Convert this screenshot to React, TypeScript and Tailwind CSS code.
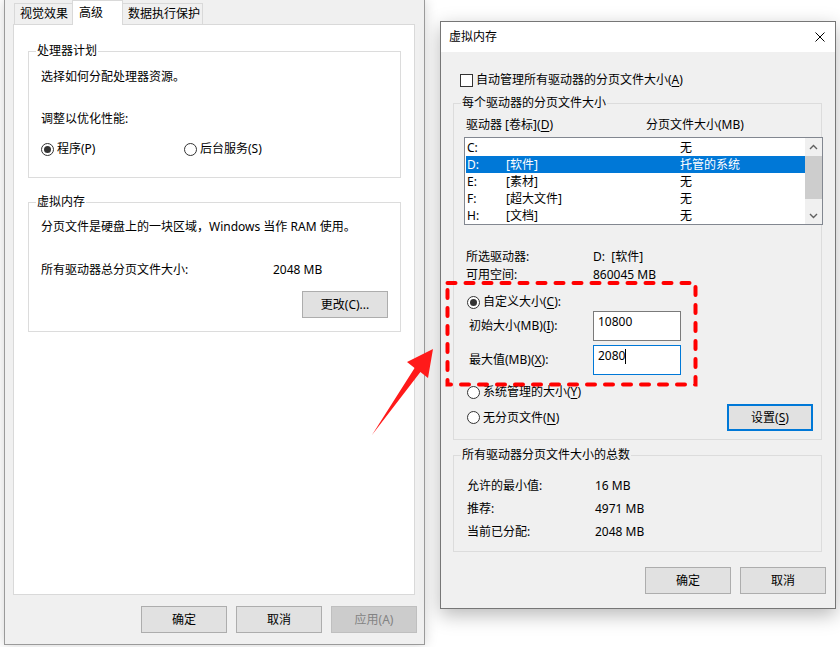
import type { ReactNode } from "react";

function GroupBox({
  title,
  labelBg,
  className,
  bodyClassName,
  children,
}: {
  title: string;
  labelBg: string;
  className: string;
  bodyClassName?: string;
  children: ReactNode;
}) {
  return (
    <div className={`border border-[#dcdcdc] ${className}`}>
      <div className="-mt-[9px] ml-[7px] flex">
        <span className={`px-[1px] leading-[16px] ${labelBg}`}>{title}</span>
      </div>
      <div className={bodyClassName}>{children}</div>
    </div>
  );
}

function Radio({ checked, children }: { checked?: boolean; children: ReactNode }) {
  return (
    <div className="flex h-[16px] items-center">
      <span className="flex h-[13px] w-[13px] items-center justify-center rounded-full border border-[#333] bg-white">
        {checked && <span className="h-[7px] w-[7px] rounded-full bg-[#333]" />}
      </span>
      <span className="ml-[3px] leading-[16px]">{children}</span>
    </div>
  );
}

function Button({
  children,
  focused,
  disabled,
}: {
  children: ReactNode;
  focused?: boolean;
  disabled?: boolean;
}) {
  if (disabled) {
    return (
      <div className="flex h-[27px] w-[86px] items-center justify-center border border-[#bfbfbf] bg-[#cccccc] text-[#838383]">
        {children}
      </div>
    );
  }
  return (
    <div
      className={
        focused
          ? "flex h-[27px] w-[86px] items-center justify-center border-2 border-[#0078d7] bg-[#e1e1e1]"
          : "flex h-[27px] w-[86px] items-center justify-center border border-[#adadad] bg-[#e1e1e1]"
      }
    >
      {children}
    </div>
  );
}

const U = ({ children }: { children: ReactNode }) => (
  <span className="underline underline-offset-[2px]">{children}</span>
);

const drives = [
  { letter: "C:", label: "", size: "无" },
  { letter: "D:", label: "[软件]", size: "托管的系统", selected: true },
  { letter: "E:", label: "[素材]", size: "无" },
  { letter: "F:", label: "[超大文件]", size: "无" },
  { letter: "H:", label: "[文档]", size: "无" },
];

function Chevron({ up }: { up?: boolean }) {
  return (
    <svg width="9" height="6" viewBox="0 0 9 6">
      <polyline
        points={up ? "1,5 4.5,1.5 8,5" : "1,1 4.5,4.5 8,1"}
        fill="none"
        stroke="#606060"
        strokeWidth="1.4"
      />
    </svg>
  );
}

function PerformanceWindow() {
  return (
    <div className="absolute left-[4px] top-0 flex h-[645px] w-[421px] flex-col border-x border-b border-[#9a9a9a] bg-[#f0f0f0] shadow-[0_0_12px_rgba(0,0,0,0.18)]">
      {/* tabs */}
      <div className="ml-[9px] flex h-[24px] items-end">
        <div className="flex h-[21px] w-[59px] items-center border border-b-0 border-[#d9d9d9] pl-[5px]">
          视觉效果
        </div>
        <div className="relative z-10 -mb-[1px] -ml-[1px] flex h-[25px] w-[51px] items-center border border-b-0 border-[#d9d9d9] bg-white pb-[1px] pl-[6px]">
          高级
        </div>
        <div className="-ml-[1px] flex h-[21px] w-[81px] items-center border border-b-0 border-[#d9d9d9] pl-[5px]">
          数据执行保护
        </div>
      </div>

      <div className="ml-[8px] h-[571px] w-[402px] border border-[#d9d9d9] bg-white">
        <GroupBox
          title="处理器计划"
          labelBg="bg-white"
          className="ml-[14px] mt-[26px] w-[373px]"
          bodyClassName="pb-[20px] pl-[12px]"
        >
          <p className="mt-[10px] leading-[16px]">选择如何分配处理器资源。</p>
          <p className="mt-[26px] leading-[16px]">调整以优化性能:</p>
          <div className="mt-[14px] flex">
            <div className="w-[143px]">
              <Radio checked>程序(P)</Radio>
            </div>
            <Radio>后台服务(S)</Radio>
          </div>
        </GroupBox>

        <GroupBox
          title="虚拟内存"
          labelBg="bg-white"
          className="ml-[14px] mt-[24px] w-[373px]"
          bodyClassName="pb-[13px] pl-[12px] pr-[12px]"
        >
          <p className="mt-[9px] leading-[16px]">分页文件是硬盘上的一块区域，Windows 当作 RAM 使用。</p>
          <div className="mt-[27px] flex leading-[16px]">
            <span className="w-[232px]">所有驱动器总分页文件大小:</span>
            <span>2048 MB</span>
          </div>
          <div className="mt-[13px] flex justify-end">
            <Button>更改(C)...</Button>
          </div>
        </GroupBox>
      </div>

      <div className="mt-[11px] flex justify-end gap-[9px] pr-[7px]">
        <Button>确定</Button>
        <Button>取消</Button>
        <Button disabled>应用(A)</Button>
      </div>
    </div>
  );
}

function VirtualMemoryDialog() {
  return (
    <div className="absolute left-[440px] top-[21px] flex h-[588px] w-[396px] flex-col border border-[#767676] bg-[#f0f0f0] shadow-[0_6px_18px_rgba(0,0,0,0.28)]">
      <div className="flex h-[30px] items-center justify-between bg-white pl-[8px] pr-[10px]">
        <span>虚拟内存</span>
        <svg width="10" height="10" viewBox="0 0 10 10">
          <path d="M0.5 0.5 L9.5 9.5 M9.5 0.5 L0.5 9.5" stroke="#000" strokeWidth="1" />
        </svg>
      </div>

      <div className="ml-[19px] mt-[20px] flex h-[16px] items-center">
        <span className="h-[13px] w-[13px] border border-[#333] bg-white" />
        <span className="ml-[3px]">
          自动管理所有驱动器的分页文件大小(<U>A</U>)
        </span>
      </div>

      <GroupBox
        title="每个驱动器的分页文件大小"
        labelBg="bg-[#f0f0f0]"
        className="ml-[12px] mt-[15px] w-[369px]"
        bodyClassName="pb-[8px]"
      >
        <div className="mt-[6px] flex pl-[12px] leading-[16px]">
          <span className="w-[180px]">
            驱动器 [卷标](<U>D</U>)
          </span>
          <span>分页文件大小(MB)</span>
        </div>

        <div className="ml-[10px] mt-[4px] flex h-[88px] w-[359px] border border-[#828790] bg-white">
          <div className="w-[340px] pl-[1px] pt-[1px]">
            {drives.map((d) => (
              <div
                key={d.letter}
                className={
                  d.selected
                    ? "flex h-[17px] w-[339px] items-center bg-[#0078d7] pl-[1px] text-white"
                    : "flex h-[17px] w-[339px] items-center pl-[1px]"
                }
              >
                <span className="w-[39px]">{d.letter}</span>
                <span className="w-[174px]">{d.label}</span>
                <span>{d.size}</span>
              </div>
            ))}
          </div>
          <div className="flex w-[17px] flex-col bg-[#f0f0f0]">
            <div className="flex h-[17px] items-center justify-center">
              <Chevron up />
            </div>
            <div className="mt-[1px] h-[43px] bg-[#cdcdcd]" />
            <div className="flex-1" />
            <div className="flex h-[17px] items-center justify-center">
              <Chevron />
            </div>
          </div>
        </div>

        <div className="mt-[23px] pl-[12px]">
          <div className="flex h-[18px] items-center">
            <span className="w-[127px]">所选驱动器:</span>
            <span>D:&nbsp;&nbsp;[软件]</span>
          </div>
          <div className="flex h-[18px] items-center">
            <span className="w-[127px]">可用空间:</span>
            <span>860045 MB</span>
          </div>
        </div>

        <div className="mt-[10px] pl-[13px]">
          <Radio checked>
            自定义大小(<U>C</U>):
          </Radio>
        </div>

        <div className="mt-[1px] flex items-center pl-[15px]">
          <span className="w-[124px]">
            初始大小(MB)(<U>I</U>):
          </span>
          <div className="h-[30px] w-[88px] border border-[#7a7a7a] bg-white pl-[4px] pt-[2px] leading-[16px]">
            10800
          </div>
        </div>
        <div className="mt-[4px] flex items-center pl-[15px]">
          <span className="w-[124px]">
            最大值(MB)(<U>X</U>):
          </span>
          <div className="flex h-[30px] w-[88px] items-start border border-[#0078d7] bg-white pl-[4px] pt-[2px] leading-[16px]">
            <span>2080</span>
            <span className="mt-[1px] h-[15px] w-px bg-black" />
          </div>
        </div>

        <div className="mt-[9px] pl-[13px]">
          <Radio>
            系统管理的大小(<U>Y</U>)
          </Radio>
        </div>
        <div className="mt-[4px] flex items-center justify-between pl-[13px] pr-[8px]">
          <Radio>
            无分页文件(<U>N</U>)
          </Radio>
          <Button focused>
            设置(<U>S</U>)
          </Button>
        </div>
      </GroupBox>

      <GroupBox
        title="所有驱动器分页文件大小的总数"
        labelBg="bg-[#f0f0f0]"
        className="ml-[12px] mt-[15px] w-[369px]"
        bodyClassName="pb-[8px] pl-[13px]"
      >
        <div className="mt-[11px]">
          {[
            ["允许的最小值:", "16 MB"],
            ["推荐:", "4971 MB"],
            ["当前已分配:", "2048 MB"],
          ].map(([k, v]) => (
            <div key={k} className="flex h-[23px] items-center">
              <span className="w-[128px]">{k}</span>
              <span>{v}</span>
            </div>
          ))}
        </div>
      </GroupBox>

      <div className="mt-[15px] flex justify-end gap-[9px] pr-[9px]">
        <Button>确定</Button>
        <Button>取消</Button>
      </div>
    </div>
  );
}

export default function App() {
  return (
    <div className="relative h-[647px] w-[840px] overflow-hidden bg-white font-['Noto_Sans','Noto_Sans_CJK_SC',sans-serif] text-[12px] leading-[16px] text-black">
      <PerformanceWindow />
      <VirtualMemoryDialog />

      {/* annotation: arrow + dashed highlight */}
      <svg
        className="pointer-events-none absolute left-0 top-0"
        width="840"
        height="647"
        viewBox="0 0 840 647"
      >
        <polygon
          points="433,349 407,362 414.6,368 372,435 420.4,372 428,378"
          fill="#ff1a1a"
        />
        <rect
          x="447.5"
          y="283"
          width="248"
          height="101.5"
          fill="none"
          stroke="#f00"
          strokeWidth="4"
          strokeDasharray="8 10"
          strokeLinecap="round"
        />
      </svg>
    </div>
  );
}
